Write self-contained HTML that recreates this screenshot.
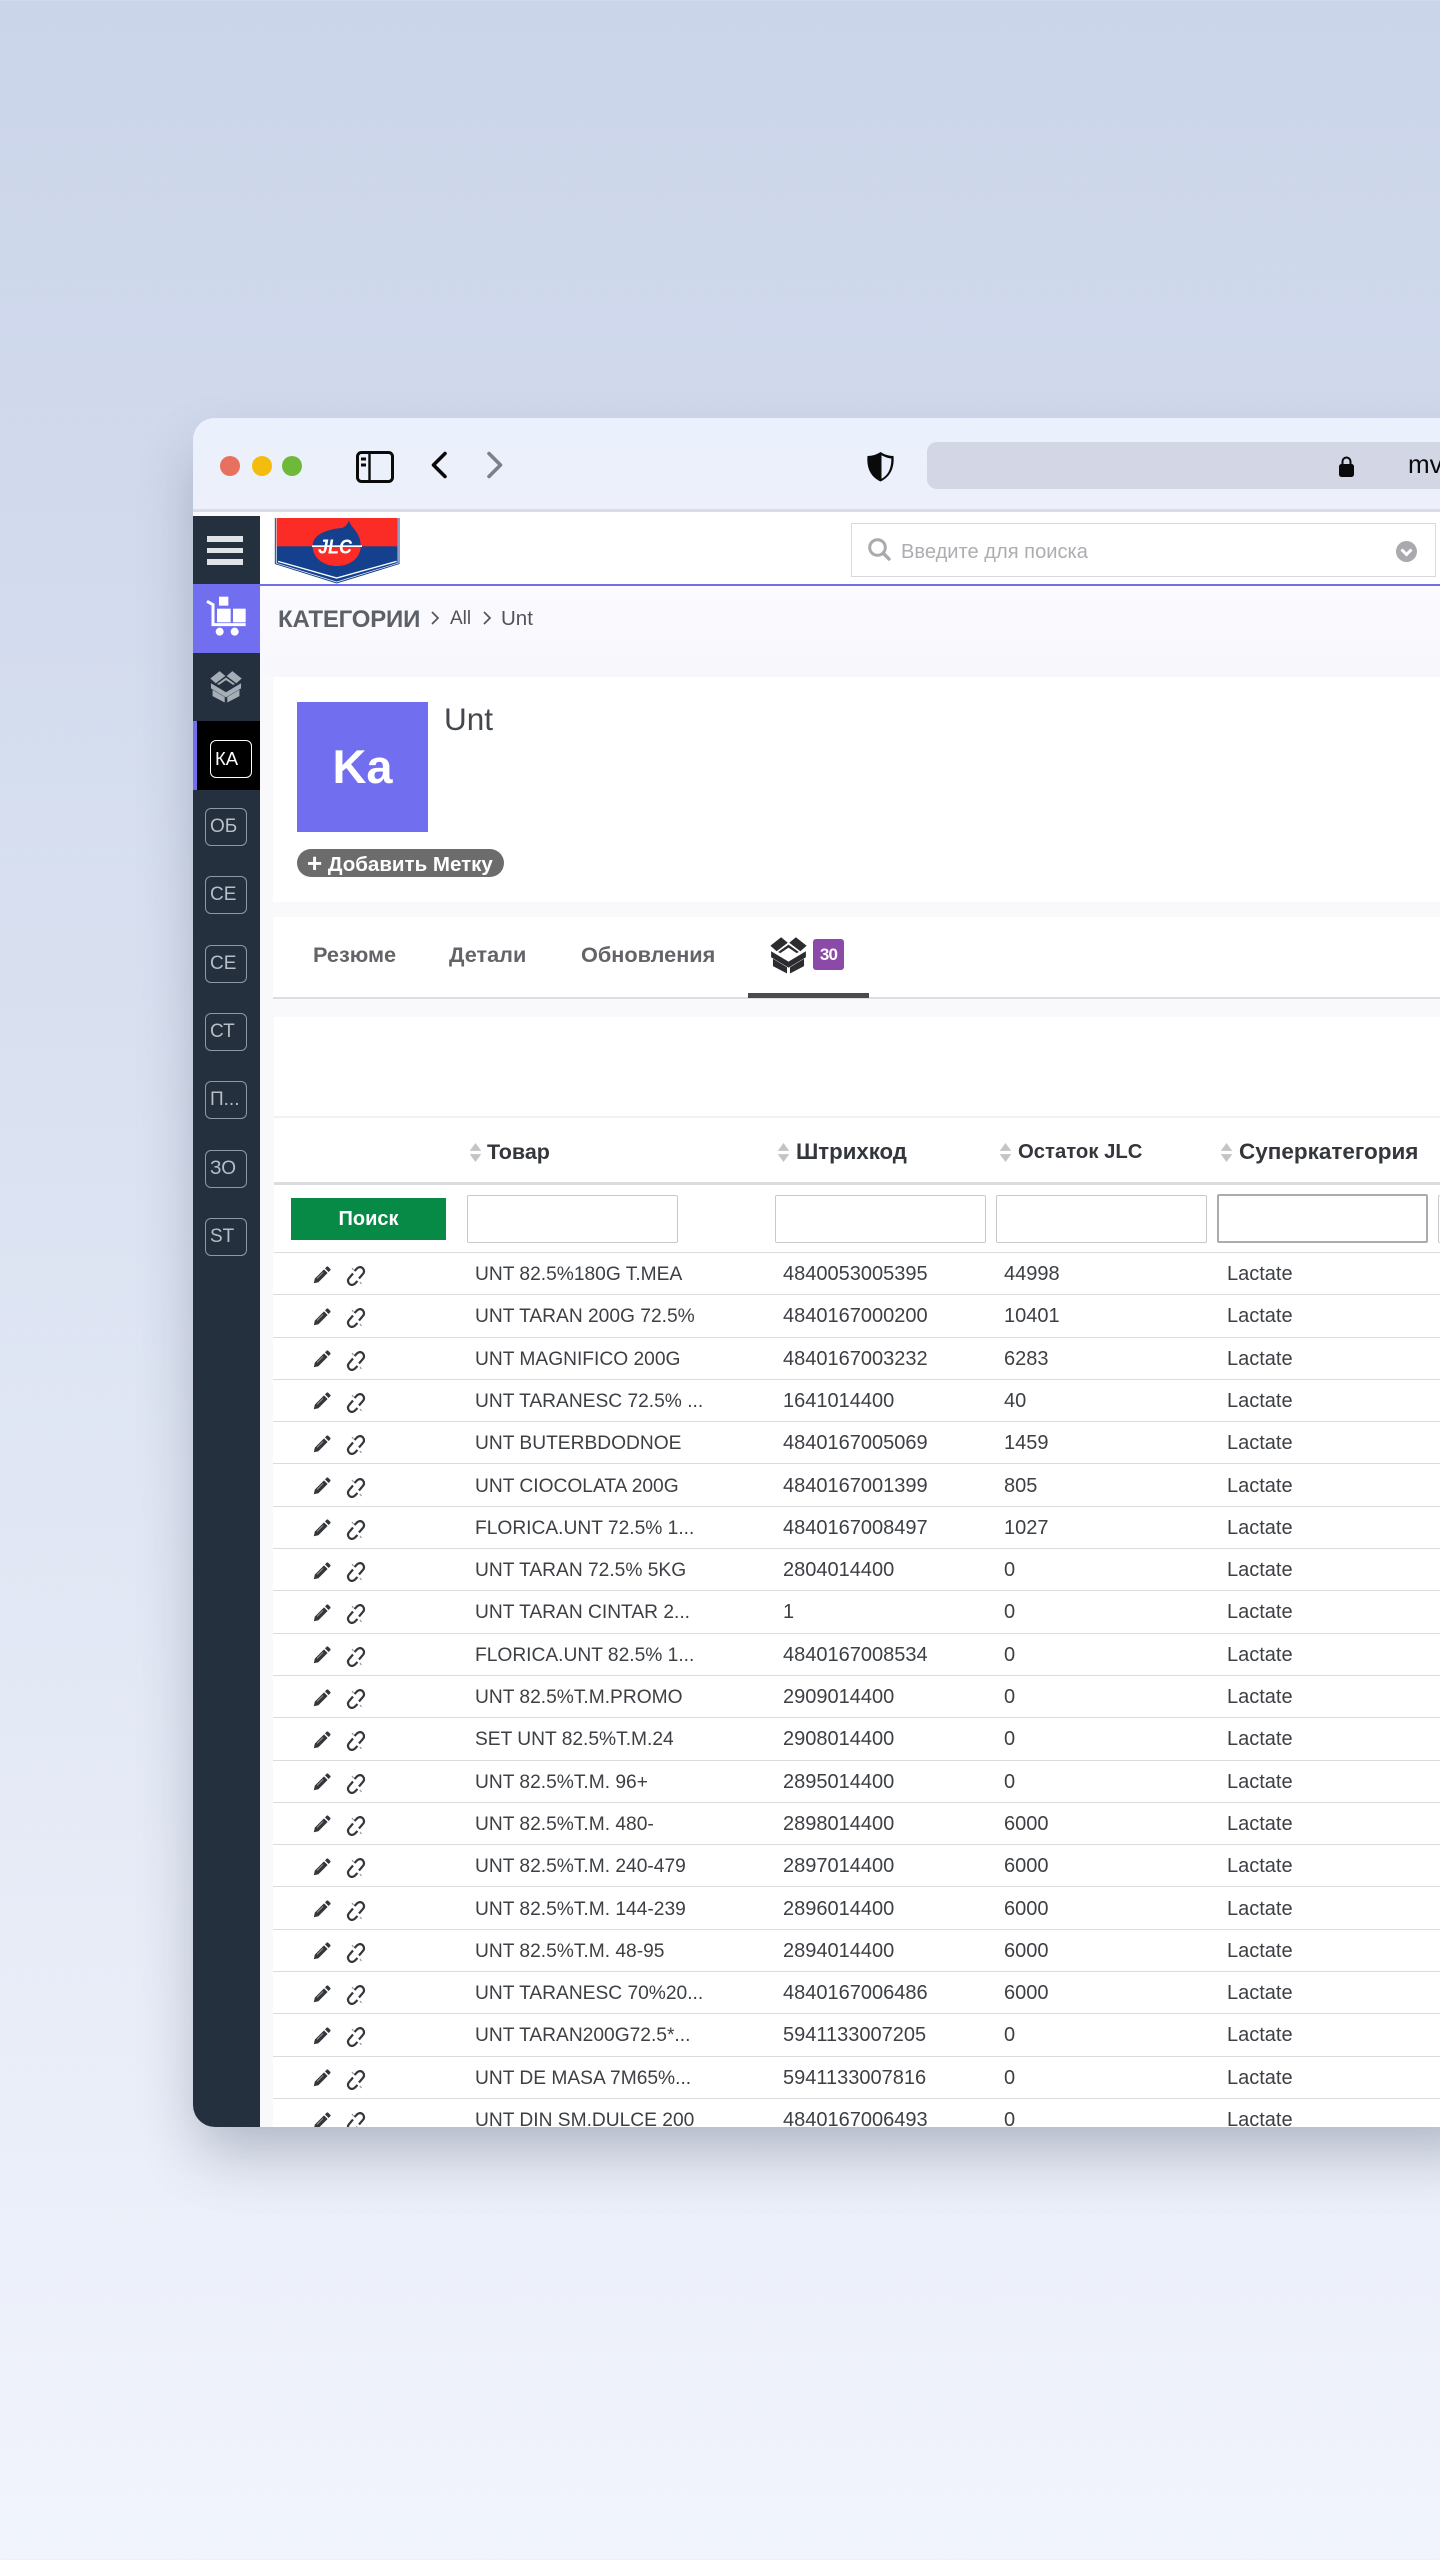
<!DOCTYPE html>
<html lang="ru"><head><meta charset="utf-8"><title>Unt</title>
<style>
*{box-sizing:border-box;margin:0;padding:0}
html,body{width:1440px;height:2560px;overflow:hidden}
body{position:relative;background:linear-gradient(180deg,#cbd5e9 0%,#d3dcee 25%,#e5eaf6 70%,#f1f4fc 100%);font-family:"Liberation Sans",sans-serif;color:#3a3d42}
.win{position:absolute;left:193px;top:418px;width:1300px;height:1709px;border-radius:22px 0 0 22px;box-shadow:0 30px 60px -6px rgba(40,50,75,.3)}
.clip{position:absolute;left:0;top:0;width:1300px;height:1709px;border-radius:22px 0 0 22px;overflow:hidden;background:#f9f8fb}
.in{position:absolute;left:-193px;top:-418px;width:1440px;height:2560px}
.a,.in>div,.in>svg,.r>*{position:absolute}
.t{white-space:nowrap}
.bdg{left:205px;width:42px;height:38px;border:1.5px solid #8f98a4;border-radius:6px;color:#b7bec6;font-size:19px;line-height:35px;padding-left:4px;white-space:nowrap}
.tab{font-size:21.7px;font-weight:700;color:#626468;top:943px;line-height:24px;white-space:nowrap}
.h{top:1139px;font-size:21.5px;font-weight:700;color:#33363b;line-height:26px;white-space:nowrap}
.so{top:1142px;width:13px;height:21px}
.inp{top:1195px;height:48px;background:#fff;border:1.5px solid #c9c9cd;border-radius:2px}
.r{left:273px;width:1167px;height:42.3px;border-bottom:1.5px solid #dcdcdf;background:#fff}
.r span{top:9px;line-height:24px;white-space:nowrap;color:#3c3f44}
.r .n{left:202px;top:10px;font-size:19.2px}
.b{left:510px;font-size:20px}
.c{left:731px;font-size:20px}
.l{left:954px;font-size:20px}
.p{left:40px;top:12.500px;width:18px;height:18px}
.k{left:73px;top:13px;width:20px;height:20px}
</style></head><body>
<svg width="0" height="0" style="position:absolute">
<symbol id="box" viewBox="0 0 100 100"><path d="M1 25 30 2 48 17 18 40ZM99 25 70 2 52 17 82 40ZM3 40 50 68 97 40 97 56 50 84 3 56ZM8 60 46 83 46 100 8 80ZM92 60 54 83 54 100 92 80ZM22 42 50 22 78 42 72 45 50 30 28 45Z" fill="currentColor"/></symbol>
<symbol id="pen" viewBox="0 0 18 18"><path d="M0.8 17.2 1.8 12.6 11 3.4 14.6 7 5.4 16.2ZM12 2.4 13.6 0.8Q14.4 0 15.2 0.8L17.2 2.8Q18 3.6 17.2 4.4L15.6 6Z" fill="#33363b"/><path d="M4 12.5 10 6.5" stroke="#fff" stroke-width=".8" opacity=".6"/></symbol>
<symbol id="lnk" viewBox="0 0 20 20"><path d="M8.5 5 11.500 2Q14.600 0 16.900 2.400 19 5 17.200 7.600L13 12.500M11.500 15 8.500 18Q5.400 20 3.100 17.600 1 15 2.800 12.400L7 7.500" fill="none" stroke="#33363b" stroke-width="2.200"/><path d="M6 2 7.500 4M14 16 15.500 18" stroke="#9a9a9e" stroke-width="1.200"/></symbol>
<symbol id="srt" viewBox="0 0 12 20"><path d="M6 1 11.500 8.500H.5ZM6 19 .5 11.500H11.500Z" fill="#c3c4c8"/></symbol>
</svg>
<div class="win"><div class="clip"><div class="in">

<!-- toolbar -->
<div style="left:193px;top:418px;width:1247px;height:94px;background:linear-gradient(180deg,#eaf1fc,#edf0fa);border-bottom:3px solid #d8dde9"></div>
<div style="left:220px;top:456px;width:20px;height:20px;border-radius:50%;background:#e8705f"></div>
<div style="left:252px;top:456px;width:20px;height:20px;border-radius:50%;background:#f4bd0e"></div>
<div style="left:282px;top:456px;width:20px;height:20px;border-radius:50%;background:#6fb93a"></div>
<svg style="left:356px;top:451px" width="38" height="32" viewBox="0 0 38 32"><rect x="1.500" y="1.500" width="35" height="29" rx="4" fill="none" stroke="#0a0a0a" stroke-width="3"/><path d="M13.500 1.500V30.500" stroke="#0a0a0a" stroke-width="2.400"/><path d="M5 8H10M5 14H10" stroke="#0a0a0a" stroke-width="3"/></svg>
<svg style="left:430px;top:451px" width="18" height="28" viewBox="0 0 18 28"><path d="M15 2.500 3.500 14 15 25.500" fill="none" stroke="#0a0a0a" stroke-width="3.600" stroke-linecap="round" stroke-linejoin="round"/></svg>
<svg style="left:486px;top:451px" width="18" height="28" viewBox="0 0 18 28"><path d="M3 2.500 14.500 14 3 25.500" fill="none" stroke="#7c8087" stroke-width="3.600" stroke-linecap="round" stroke-linejoin="round"/></svg>
<svg style="left:866px;top:451px" width="29" height="31" viewBox="0 0 29 31"><path d="M14.500 1C18 3.500 23 5 27.500 5 28.500 16 25 25.500 14.500 30.500 4 25.500 .5 16 1.500 5 6 5 11 3.500 14.500 1Z" fill="#0a0a0a"/><path d="M15.500 4.300C18.500 6 21.800 7.200 25.300 7.500 25.600 15.500 23 23.800 15.500 27.800Z" fill="#e9eefa"/></svg>
<div style="left:927px;top:442px;width:540px;height:47px;background:#d3d7e5;border-radius:10px"></div>
<svg style="left:1339px;top:456px" width="15" height="21" viewBox="0 0 15 21"><rect x="0" y="8" width="15" height="13" rx="2.500" fill="#0a0a0a"/><path d="M3.500 9V5.500a4 4 0 0 1 8 0V9" fill="none" stroke="#0a0a0a" stroke-width="2"/></svg>
<div class="t" style="left:1408px;top:449px;font-size:26px;line-height:30px;color:#0a0a0a">mv</div>

<!-- header -->
<div style="left:260px;top:512px;width:1180px;height:74px;background:#fff;border-bottom:2px solid #716fe6"></div>
<svg style="left:270px;top:512px" width="140" height="74" viewBox="0 0 420 222">
<path d="M16 18V155L200 213 387 155V18" fill="none" stroke="#14408e" stroke-width="3"/>
<path d="M20 18H383V153L200 209 20 153Z" fill="#14408e"/>
<rect x="20" y="18" width="363" height="85" fill="#fb2b25"/>
<path d="M24 148 200 198 380 148" fill="none" stroke="#fff" stroke-width="4"/>
<path d="M237 25C240 45 272 60 272 100 272 132 240 162 200 162 160 162 128 132 128 100 128 65 180 50 215 48 225 45 232 38 237 25Z" fill="#14408e"/>
<path d="M128 103H272C272 137 240 162 200 162 160 162 128 137 128 103Z" fill="#fb2b25"/>
<rect x="126" y="100" width="150" height="5" fill="#fff"/>
<text x="195" y="124" text-anchor="middle" font-family="Liberation Sans" font-weight="700" font-style="italic" font-size="62" fill="#fff" textLength="102" lengthAdjust="spacingAndGlyphs">JLC</text>
</svg>
<div style="left:851px;top:523px;width:585px;height:54px;background:#fff;border:1.5px solid #d8d8df"></div>
<svg style="left:868px;top:538px" width="23" height="23" viewBox="0 0 23 23"><circle cx="9.500" cy="9.500" r="7.800" fill="none" stroke="#a9a9ae" stroke-width="3"/><path d="M15 15 21 21" stroke="#a9a9ae" stroke-width="3.400" stroke-linecap="round"/></svg>
<div class="t" style="left:901px;top:539px;font-size:20.100px;line-height:26px;color:#adadb2">Введите для поиска</div>
<svg style="left:1396px;top:541px" width="21" height="21" viewBox="0 0 21 21"><circle cx="10.500" cy="10.500" r="10.500" fill="#a9a9ae"/><path d="M5.500 8.500 10.500 13.500 15.500 8.500" fill="none" stroke="#fff" stroke-width="3"/></svg>

<!-- sidebar -->
<div style="left:193px;top:516px;width:67px;height:1611px;background:#25303f"></div>
<div style="left:207px;top:536px;width:36px;height:6px;background:#dfe3e8"></div>
<div style="left:207px;top:548px;width:36px;height:5px;background:#dfe3e8"></div>
<div style="left:207px;top:559px;width:36px;height:6px;background:#dfe3e8"></div>
<div style="left:193px;top:584px;width:67px;height:69px;background:#716fef"></div>
<svg style="left:193px;top:584px" width="70" height="130" viewBox="0 0 210 390" preserveAspectRatio="none">
<g fill="#fff"><rect x="78" y="38" width="28" height="27"/><rect x="72" y="74" width="41" height="41"/><rect x="120" y="74" width="38" height="41"/><circle cx="80" cy="143" r="12"/><circle cx="125" cy="143" r="12"/></g>
<path d="M42 52 60 62V122H158" fill="none" stroke="#fff" stroke-width="9"/>
</svg>
<svg style="left:210px;top:669px;color:#a5adb6" width="32" height="35"><use href="#box"/></svg>
<div style="left:193px;top:721px;width:67px;height:69px;background:#000;border-left:4px solid #716fef"></div>
<div class="bdg" style="left:210px;top:740px;border-color:#fff;color:#fff;font-size:18.500px">КА</div>
<div class="bdg" style="top:808px">ОБ</div>
<div class="bdg" style="top:876px">СЕ</div>
<div class="bdg" style="top:945px">СЕ</div>
<div class="bdg" style="top:1013px">СТ</div>
<div class="bdg" style="top:1081px">П...</div>
<div class="bdg" style="top:1150px">ЗО</div>
<div class="bdg" style="top:1218px">ST</div>

<!-- breadcrumb -->
<div style="left:260px;top:586px;width:1180px;height:91px;background:linear-gradient(180deg,#fbfbff,#f8f7fb)"></div>
<div class="t" style="left:278px;top:605px;font-size:24px;font-weight:700;line-height:30px;color:#5c6069;letter-spacing:-.2px">КАТЕГОРИИ</div>
<svg style="left:430px;top:610px" width="10" height="16" viewBox="0 0 10 16"><path d="M2 2 8 8 2 14" fill="none" stroke="#555" stroke-width="1.700"/></svg>
<div class="t" style="left:450px;top:606px;font-size:19px;line-height:26px;color:#50535a">All</div>
<svg style="left:482px;top:610px" width="10" height="16" viewBox="0 0 10 16"><path d="M2 2 8 8 2 14" fill="none" stroke="#555" stroke-width="1.700"/></svg>
<div class="t" style="left:501px;top:606px;font-size:20.500px;line-height:26px;color:#50535a">Unt</div>

<!-- title panel -->
<div style="left:273px;top:677px;width:1167px;height:225px;background:#fff"></div>
<div style="left:297px;top:702px;width:131px;height:130px;background:#716fef;color:#fff;font-size:47px;font-weight:700;line-height:130px;text-align:center">Ka</div>
<div class="t" style="left:444px;top:701px;font-size:31.500px;line-height:36px;color:#44474c">Unt</div>
<div class="t" style="left:297px;top:849px;width:207px;height:28px;border-radius:14px;background:#6c6c6c;color:#fff;font-size:20.500px;font-weight:700;line-height:28px;padding-left:10px"><span style="font-size:26px;vertical-align:-1px">+</span> Добавить Метку</div>

<!-- tabs -->
<div style="left:273px;top:917px;width:1167px;height:82px;background:#fff;border-bottom:2px solid #dedee2"></div>
<div class="tab" style="left:313px">Резюме</div>
<div class="tab" style="left:449px">Детали</div>
<div class="tab" style="left:581px">Обновления</div>
<svg style="left:770px;top:936px;color:#2c2c30" width="37" height="38"><use href="#box"/></svg>
<div style="left:813px;top:939px;width:31px;height:31px;background:#8b49a8;border-radius:3px;color:#fff;font-size:17px;font-weight:700;line-height:31px;text-align:center;letter-spacing:-.8px">30</div>
<div style="left:748px;top:993px;width:121px;height:5px;background:#4a4a4f"></div>

<!-- list panel -->
<div style="left:274px;top:1017px;width:1166px;height:1110px;background:#fff"></div>
<div style="left:274px;top:1116px;width:1166px;height:2px;background:#f1f1f4"></div>
<div style="left:274px;top:1182px;width:1166px;height:3px;background:#dcdcdf"></div>
<svg class="so" style="left:469px"><use href="#srt"/></svg><div class="h" style="left:487px">Товар</div>
<svg class="so" style="left:777px"><use href="#srt"/></svg><div class="h" style="left:796px;font-size:22.200px">Штрихкод</div>
<svg class="so" style="left:999px"><use href="#srt"/></svg><div class="h" style="left:1018px;font-size:20.300px">Остаток JLC</div>
<svg class="so" style="left:1220px"><use href="#srt"/></svg><div class="h" style="left:1239px;font-size:22.500px">Суперкатегория</div>

<div style="left:291px;top:1198px;width:155px;height:42px;background:#078a46;color:#fff;font-size:20px;font-weight:700;line-height:42px;text-align:center">Поиск</div>
<div class="inp" style="left:467px;width:211px"></div>
<div class="inp" style="left:775px;width:211px"></div>
<div class="inp" style="left:996px;width:211px"></div>
<div class="inp" style="left:1217px;width:211px;top:1194px;height:49px;border:2px solid #aaacb0"></div>
<div class="inp" style="left:1438px;width:20px"></div>
<div style="left:274px;top:1252px;width:1166px;height:2px;background:#dcdcdf"></div>

<div class="r" style="top:1253.0px"><svg class="p"><use href="#pen"/></svg><svg class="k"><use href="#lnk"/></svg><span class="n">UNT 82.5%180G T.MEA</span><span class="b">4840053005395</span><span class="c">44998</span><span class="l">Lactate</span></div>
<div class="r" style="top:1295.3px"><svg class="p"><use href="#pen"/></svg><svg class="k"><use href="#lnk"/></svg><span class="n">UNT TARAN 200G 72.5%</span><span class="b">4840167000200</span><span class="c">10401</span><span class="l">Lactate</span></div>
<div class="r" style="top:1337.6px"><svg class="p"><use href="#pen"/></svg><svg class="k"><use href="#lnk"/></svg><span class="n">UNT MAGNIFICO 200G</span><span class="b">4840167003232</span><span class="c">6283</span><span class="l">Lactate</span></div>
<div class="r" style="top:1379.9px"><svg class="p"><use href="#pen"/></svg><svg class="k"><use href="#lnk"/></svg><span class="n">UNT TARANESC 72.5% ...</span><span class="b">1641014400</span><span class="c">40</span><span class="l">Lactate</span></div>
<div class="r" style="top:1422.2px"><svg class="p"><use href="#pen"/></svg><svg class="k"><use href="#lnk"/></svg><span class="n">UNT BUTERBDODNOE</span><span class="b">4840167005069</span><span class="c">1459</span><span class="l">Lactate</span></div>
<div class="r" style="top:1464.5px"><svg class="p"><use href="#pen"/></svg><svg class="k"><use href="#lnk"/></svg><span class="n">UNT CIOCOLATA 200G</span><span class="b">4840167001399</span><span class="c">805</span><span class="l">Lactate</span></div>
<div class="r" style="top:1506.8px"><svg class="p"><use href="#pen"/></svg><svg class="k"><use href="#lnk"/></svg><span class="n">FLORICA.UNT 72.5% 1...</span><span class="b">4840167008497</span><span class="c">1027</span><span class="l">Lactate</span></div>
<div class="r" style="top:1549.1px"><svg class="p"><use href="#pen"/></svg><svg class="k"><use href="#lnk"/></svg><span class="n">UNT TARAN 72.5% 5KG</span><span class="b">2804014400</span><span class="c">0</span><span class="l">Lactate</span></div>
<div class="r" style="top:1591.4px"><svg class="p"><use href="#pen"/></svg><svg class="k"><use href="#lnk"/></svg><span class="n">UNT TARAN CINTAR 2...</span><span class="b">1</span><span class="c">0</span><span class="l">Lactate</span></div>
<div class="r" style="top:1633.7px"><svg class="p"><use href="#pen"/></svg><svg class="k"><use href="#lnk"/></svg><span class="n">FLORICA.UNT 82.5% 1...</span><span class="b">4840167008534</span><span class="c">0</span><span class="l">Lactate</span></div>
<div class="r" style="top:1676.0px"><svg class="p"><use href="#pen"/></svg><svg class="k"><use href="#lnk"/></svg><span class="n">UNT 82.5%T.M.PROMO</span><span class="b">2909014400</span><span class="c">0</span><span class="l">Lactate</span></div>
<div class="r" style="top:1718.3px"><svg class="p"><use href="#pen"/></svg><svg class="k"><use href="#lnk"/></svg><span class="n">SET UNT 82.5%T.M.24</span><span class="b">2908014400</span><span class="c">0</span><span class="l">Lactate</span></div>
<div class="r" style="top:1760.6px"><svg class="p"><use href="#pen"/></svg><svg class="k"><use href="#lnk"/></svg><span class="n">UNT 82.5%T.M. 96+</span><span class="b">2895014400</span><span class="c">0</span><span class="l">Lactate</span></div>
<div class="r" style="top:1802.9px"><svg class="p"><use href="#pen"/></svg><svg class="k"><use href="#lnk"/></svg><span class="n">UNT 82.5%T.M. 480-</span><span class="b">2898014400</span><span class="c">6000</span><span class="l">Lactate</span></div>
<div class="r" style="top:1845.2px"><svg class="p"><use href="#pen"/></svg><svg class="k"><use href="#lnk"/></svg><span class="n">UNT 82.5%T.M. 240-479</span><span class="b">2897014400</span><span class="c">6000</span><span class="l">Lactate</span></div>
<div class="r" style="top:1887.5px"><svg class="p"><use href="#pen"/></svg><svg class="k"><use href="#lnk"/></svg><span class="n">UNT 82.5%T.M. 144-239</span><span class="b">2896014400</span><span class="c">6000</span><span class="l">Lactate</span></div>
<div class="r" style="top:1929.8px"><svg class="p"><use href="#pen"/></svg><svg class="k"><use href="#lnk"/></svg><span class="n">UNT 82.5%T.M. 48-95</span><span class="b">2894014400</span><span class="c">6000</span><span class="l">Lactate</span></div>
<div class="r" style="top:1972.1px"><svg class="p"><use href="#pen"/></svg><svg class="k"><use href="#lnk"/></svg><span class="n">UNT TARANESC 70%20...</span><span class="b">4840167006486</span><span class="c">6000</span><span class="l">Lactate</span></div>
<div class="r" style="top:2014.4px"><svg class="p"><use href="#pen"/></svg><svg class="k"><use href="#lnk"/></svg><span class="n">UNT TARAN200G72.5*...</span><span class="b">5941133007205</span><span class="c">0</span><span class="l">Lactate</span></div>
<div class="r" style="top:2056.7px"><svg class="p"><use href="#pen"/></svg><svg class="k"><use href="#lnk"/></svg><span class="n">UNT DE MASA 7M65%...</span><span class="b">5941133007816</span><span class="c">0</span><span class="l">Lactate</span></div>
<div class="r" style="top:2099.0px"><svg class="p"><use href="#pen"/></svg><svg class="k"><use href="#lnk"/></svg><span class="n">UNT DIN SM.DULCE 200</span><span class="b">4840167006493</span><span class="c">0</span><span class="l">Lactate</span></div>

</div></div></div>
</body></html>
